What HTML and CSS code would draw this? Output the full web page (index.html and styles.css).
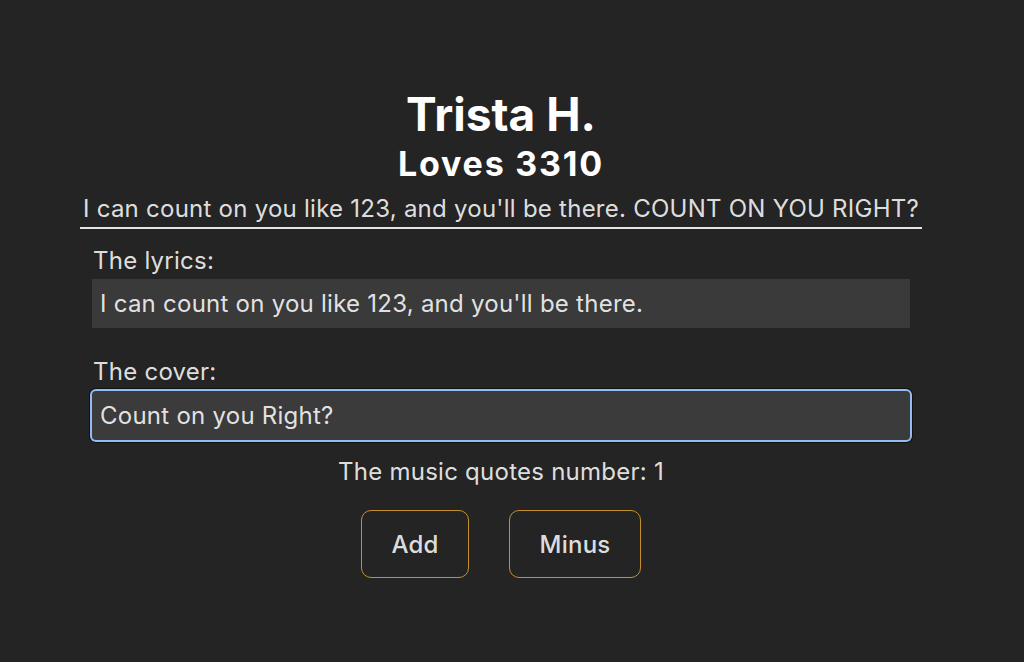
FILE: index.html
```html
<!DOCTYPE html>
<html lang="en">
<head>
<meta charset="utf-8">
<title>Trista H.</title>
<link rel="stylesheet" href="styles.css">
</head>
<body>
<main class="app">
  <h1 class="name">Trista H.</h1>
  <h2 class="loves">Loves 3310</h2>
  <p class="quote">I can count on you like 123, and you'll be there. COUNT ON YOU RIGHT?</p>
  <div class="form">
    <label class="label" for="lyrics">The lyrics:</label>
    <input class="field" id="lyrics" type="text" value="I can count on you like 123, and you'll be there." readonly>
    <label class="label label-cover" for="cover">The cover:</label>
    <input class="field field-focus" id="cover" type="text" value="Count on you Right?" autofocus>
  </div>
  <p class="count">The music quotes number: 1</p>
  <div class="buttons">
    <button class="btn btn-add" type="button">Add</button>
    <button class="btn btn-minus" type="button">Minus</button>
  </div>
</main>
</body>
</html>
```
FILE: styles.css
```css
html, body {
  margin: 0;
  padding: 0;
  background: #242424;
}
body {
  font-family: Inter, "Noto Sans", "Liberation Sans", sans-serif;
  color: rgba(255, 255, 255, 0.87);
  min-height: 662px;
}
.app {
  display: flex;
  flex-direction: column;
  align-items: center;
  padding-top: 86px;
  padding-right: 22px;
}
.name {
  margin: 0;
  font-size: 46px;
  line-height: 56px;
  font-weight: 700;
  color: #ffffff;
}
.loves {
  margin: 2px 0 0;
  font-size: 34px;
  line-height: 40px;
  font-weight: 700;
  letter-spacing: 1.8px;
  color: #ffffff;
}
.quote {
  margin: 10px 0 0;
  font-size: 24px;
  line-height: 30px;
  letter-spacing: 0.25px;
  padding-bottom: 3px;
  border-bottom: 2px solid #e6e6e6;
  width: 842px;
  text-align: center;
  white-space: nowrap;
}
.form {
  width: 818px;
  display: flex;
  flex-direction: column;
  margin-top: 16px;
}
.label {
  font-size: 24px;
  line-height: 32px;
  letter-spacing: 0.25px;
  padding-left: 1px;
}
.label-cover {
  margin-top: 28px;
}
.field {
  box-sizing: border-box;
  width: 818px;
  height: 49px;
  margin-top: 2px;
  padding: 0 8px;
  border: none;
  border-radius: 0;
  background: #3a3a3a;
  color: rgba(255, 255, 255, 0.87);
  font-family: inherit;
  font-size: 24px;
  letter-spacing: 0.25px;
  outline: none;
}
.field-focus {
  margin-top: 3px;
  height: 49px;
  border-radius: 4px;
  box-shadow: 0 0 0 2px #94bcf2, 0 0 0 3px #111;
  background: #3b3b3b;
}
.count {
  margin: 17px 0 0;
  font-size: 24px;
  line-height: 30px;
  letter-spacing: 0.25px;
}
.buttons {
  display: flex;
  gap: 40px;
  margin-top: 23px;
}
.btn {
  height: 68px;
  border: 1.5px solid #c38f2f;
  border-radius: 10px;
  background: #242424;
  color: rgba(255, 255, 255, 0.87);
  font-family: inherit;
  font-size: 24px;
  letter-spacing: 0.25px;
  font-weight: 500;
  padding: 0;
}
.btn-add { width: 108px; }
.btn-minus { width: 132px; }
```
